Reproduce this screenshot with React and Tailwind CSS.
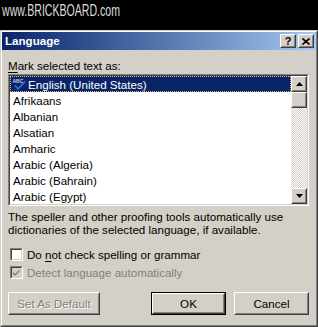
import React from 'react';

const languages = [
  'Afrikaans',
  'Albanian',
  'Alsatian',
  'Amharic',
  'Arabic (Algeria)',
  'Arabic (Bahrain)',
  'Arabic (Egypt)',
];

// classic 3D raised edge (buttons, scrollbar parts)
const Raised = ({ className = '', children }) => (
  <div className={`border border-t-white border-l-white border-r-[#404040] border-b-[#404040] bg-[#d4d0c8] ${className}`}>
    <div className="w-full h-full border border-t-transparent border-l-transparent border-r-[#808080] border-b-[#808080] flex items-center justify-center">
      {children}
    </div>
  </div>
);

const Sunken = ({ className = '', innerClass = '', children }) => (
  <div className={`border border-t-[#808080] border-l-[#808080] border-r-white border-b-white ${className}`}>
    <div className={`w-full h-full border border-t-[#404040] border-l-[#404040] border-r-[#d4d0c8] border-b-[#d4d0c8] ${innerClass}`}>
      {children}
    </div>
  </div>
);

const SpellIcon = () => (
  <svg width="15" height="13" viewBox="0 0 15 13" className="shrink-0">
    <text x="0.5" y="5" fontSize="5" fontWeight="bold" fill="#c8c8d8" fontFamily="Liberation Sans, Arial, sans-serif">ABC</text>
    <path d="M3 7.5 L6 11 L13 3.5" stroke="#3a6ee0" strokeWidth="1.6" fill="none" />
  </svg>
);

const Check = ({ color }) => (
  <svg width="9" height="9" viewBox="0 0 9 9">
    <path d="M1 4 L3 6 L7.5 1.5 L7.5 3.5 L3 8 L1 6 Z" fill={color} />
  </svg>
);

const Checkbox = ({ checked, disabled }) => (
  <Sunken className="w-[13px] h-[13px] shrink-0" innerClass={`${disabled ? 'bg-[#d4d0c8]' : 'bg-white'} flex items-center justify-center`}>
    {checked && <Check color={disabled ? '#808080' : '#000000'} />}
  </Sunken>
);

const Arrow = ({ up }) => (
  <svg width="7" height="4" viewBox="0 0 7 4">
    {up ? <path d="M3.5 0 L7 4 L0 4 Z" fill="#000" /> : <path d="M0 0 L7 0 L3.5 4 Z" fill="#000" />}
  </svg>
);

export default function App() {
  return (
    <div className="w-[318px] h-[327px] bg-black overflow-hidden font-['Liberation_Sans',Arial,sans-serif] text-[11.6px] text-black select-none">
      {/* watermark strip */}
      <div className="h-[30px] pl-[2px] pt-[1px]">
        <span className="inline-block origin-left scale-x-[0.66] text-[16px] leading-[19px] text-[#dcdcdc] whitespace-nowrap">
          www.BRICKBOARD.com
        </span>
      </div>

      {/* dialog */}
      <div className="h-[297px] border border-t-[#d4d0c8] border-l-[#d4d0c8] border-r-[#404040] border-b-[#404040]">
        <div className="h-full flex flex-col border border-t-white border-l-white border-r-[#808080] border-b-[#808080] bg-[#d4d0c8]">
          {/* title bar */}
          <div className="h-[18px] shrink-0 flex items-center justify-between pl-[3px] pr-[2px] bg-gradient-to-r from-[#0a246a] to-[#a6caf0]">
            <span className="text-white font-bold leading-[18px]">Language</span>
            <div className="flex gap-[2px]">
              <Raised className="w-[16px] h-[14px]">
                <span className="font-bold text-[11px] leading-none">?</span>
              </Raised>
              <Raised className="w-[16px] h-[14px]">
                <svg width="8" height="7" viewBox="0 0 8 7">
                  <path d="M0.5 0.5 L7.5 6.5 M7.5 0.5 L0.5 6.5" stroke="#000" strokeWidth="1.6" />
                </svg>
              </Raised>
            </div>
          </div>

          {/* body */}
          <div className="flex-1 flex flex-col pl-[6px] pr-[7px]">
            <div className="mt-[9px] leading-[13px]">
              <span className="underline underline-offset-2">M</span>ark selected text as:
            </div>

            <Sunken className="mt-[2px] h-[132px] w-[301px]" innerClass="bg-white flex">
              <div className="flex-1 flex flex-col">
                <div className="h-[16px] border border-dotted border-[#d8c070] bg-[#0a246a] flex items-center pl-[1px] text-white">
                  <SpellIcon />
                  <span className="leading-[13px] ml-[1px]">English (United States)</span>
                </div>
                {languages.map((l) => (
                  <div key={l} className="h-[16px] flex items-center pl-[3px] leading-[13px]">
                    {l}
                  </div>
                ))}
              </div>
              <div className="w-[16px] flex flex-col">
                <Raised className="h-[16px]"><Arrow up /></Raised>
                <Raised className="h-[16px]" />
                <div className="flex-1 bg-[repeating-conic-gradient(#ffffff_0%_25%,#d4d0c8_0%_50%)] bg-size-[2px_2px]" />
                <Raised className="h-[16px]"><Arrow /></Raised>
              </div>
            </Sunken>

            <p className="mt-[4px] leading-[13px]">
              The speller and other proofing tools automatically use dictionaries of the selected language, if available.
            </p>

            <div className="mt-[12px] h-[13px] flex items-center gap-[4px] pl-[2px]">
              <Checkbox />
              <span className="leading-[13px]">
                Do <span className="underline underline-offset-2">n</span>ot check spelling or grammar
              </span>
            </div>
            <div className="mt-[5px] h-[13px] flex items-center gap-[4px] pl-[2px]">
              <Checkbox checked disabled />
              <span className="leading-[13px] text-[#808080]">Detect language automatically</span>
            </div>

            <div className="mt-[13px] flex items-center">
              <Raised className="w-[92px] h-[23px]">
                <span className="text-[#808080] [text-shadow:1px_1px_0_#ffffff]">Set As Default</span>
              </Raised>
              <div className="flex-1" />
              <div className="w-[75px] h-[23px] border border-black">
                <Raised className="w-full h-full">OK</Raised>
              </div>
              <Raised className="w-[75px] h-[23px] ml-[8px]">Cancel</Raised>
            </div>
          </div>
        </div>
      </div>
    </div>
  );
}
